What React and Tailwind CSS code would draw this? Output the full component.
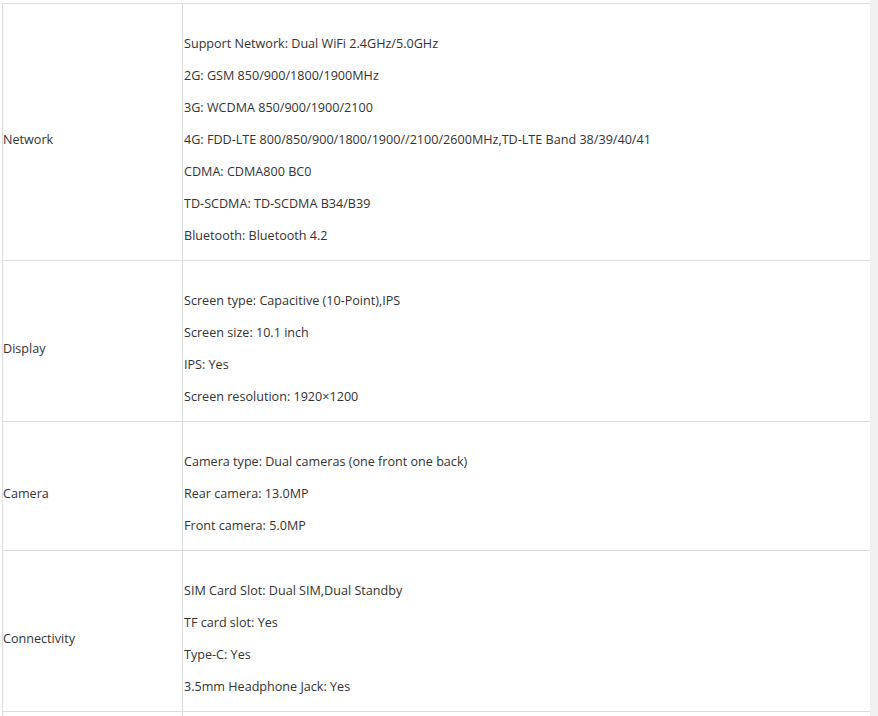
import React from "react";

const specs = [
  {
    label: "Network",
    items: [
      "Support Network: Dual WiFi 2.4GHz/5.0GHz",
      "2G: GSM 850/900/1800/1900MHz",
      "3G: WCDMA 850/900/1900/2100",
      "4G: FDD-LTE 800/850/900/1800/1900//2100/2600MHz,TD-LTE Band 38/39/40/41",
      "CDMA: CDMA800 BC0",
      "TD-SCDMA: TD-SCDMA B34/B39",
      "Bluetooth: Bluetooth 4.2",
    ],
  },
  {
    label: "Display",
    items: [
      "Screen type: Capacitive (10-Point),IPS",
      "Screen size: 10.1 inch",
      "IPS: Yes",
      "Screen resolution: 1920×1200",
    ],
  },
  {
    label: "Camera",
    items: [
      "Camera type: Dual cameras (one front one back)",
      "Rear camera: 13.0MP",
      "Front camera: 5.0MP",
    ],
  },
  {
    label: "Connectivity",
    items: [
      "SIM Card Slot: Dual SIM,Dual Standby",
      "TF card slot: Yes",
      "Type-C: Yes",
      "3.5mm Headphone Jack: Yes",
    ],
  },
];

function SpecRow({ label, items }) {
  return (
    <div className="flex border-t border-[#dddddd]">
      <div className="w-[179px] shrink-0 flex items-center pt-[31px] pb-[15px]">
        {label}
      </div>
      <div className="flex-1 border-l border-[#dddddd] pl-[1px] pt-[31px] pb-[15px] flex flex-col gap-[14px]">
        {items.map((item) => (
          <p key={item} className="leading-[18px] whitespace-nowrap">
            {item}
          </p>
        ))}
      </div>
    </div>
  );
}

export default function App() {
  return (
    <div className="flex h-[716px] w-[878px] overflow-hidden bg-white font-['Open_Sans',sans-serif] text-[12.6px] text-[#333333]">
      <div className="flex-1 pt-[3px] pl-[2px]">
        <div className="border-l border-[#dddddd]">
          {specs.map((row) => (
            <SpecRow key={row.label} label={row.label} items={row.items} />
          ))}
          <div className="flex border-t border-[#dddddd] h-[40px]">
            <div className="w-[179px] shrink-0" />
            <div className="flex-1 border-l border-[#dddddd]" />
          </div>
        </div>
      </div>
      <div className="w-[8px] shrink-0 bg-[#f0f0f0]" />
    </div>
  );
}
